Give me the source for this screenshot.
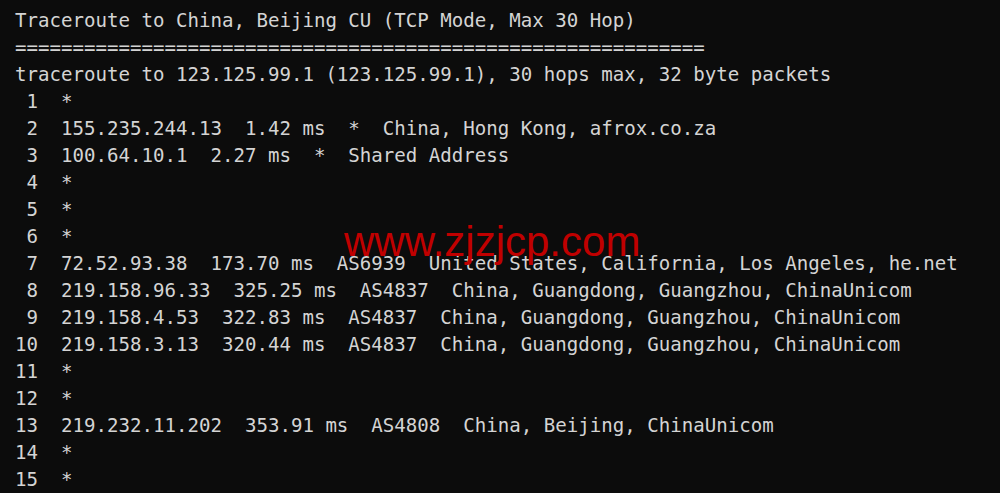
const lines = [
  "Traceroute to China, Beijing CU (TCP Mode, Max 30 Hop)",
  "============================================================",
  "traceroute to 123.125.99.1 (123.125.99.1), 30 hops max, 32 byte packets",
  " 1  *",
  " 2  155.235.244.13  1.42 ms  *  China, Hong Kong, afrox.co.za",
  " 3  100.64.10.1  2.27 ms  *  Shared Address",
  " 4  *",
  " 5  *",
  " 6  *",
  " 7  72.52.93.38  173.70 ms  AS6939  United States, California, Los Angeles, he.net",
  " 8  219.158.96.33  325.25 ms  AS4837  China, Guangdong, Guangzhou, ChinaUnicom",
  " 9  219.158.4.53  322.83 ms  AS4837  China, Guangdong, Guangzhou, ChinaUnicom",
  "10  219.158.3.13  320.44 ms  AS4837  China, Guangdong, Guangzhou, ChinaUnicom",
  "11  *",
  "12  *",
  "13  219.232.11.202  353.91 ms  AS4808  China, Beijing, ChinaUnicom",
  "14  *",
  "15  *",
];

export default function App() {
  return (
    <div className="relative h-[493px] w-[1000px] overflow-hidden bg-[#0c0c0c]">
      <div className="pl-[15px] pt-[7px] font-['DejaVu_Sans_Mono',monospace] text-[19.1px] leading-[27px] text-[#d4d4d4]">
        {lines.map((l, i) => (
          <div key={i} className="whitespace-pre">
            {l}
          </div>
        ))}
      </div>
      <div className="absolute left-[344px] top-[221px] font-['Liberation_Sans',Arial,sans-serif] text-[42px] leading-none text-[#c00000]">
        www.zjzjcp.com
      </div>
    </div>
  );
}
